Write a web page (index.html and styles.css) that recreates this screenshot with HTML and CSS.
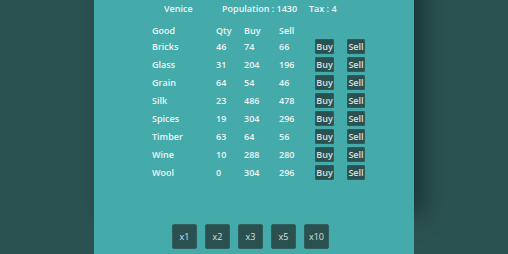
FILE: index.html
```html
<!DOCTYPE html>
<html>
<head>
<meta charset="utf-8">
<link rel="stylesheet" href="styles.css">
</head>
<body>
<div class="panel">
  <div class="city">
    <span class="name">Venice</span>
    <span class="pop">Population : 1430</span>
    <span class="tax">Tax : 4</span>
  </div>
  <div class="market">
    <div class="row head"><span>Good</span><span>Qty</span><span>Buy</span><span>Sell</span></div>
    <div class="row"><span>Bricks</span><span>46</span><span>74</span><span>66</span><button class="btn">Buy</button><button class="btn sell">Sell</button></div>
    <div class="row"><span>Glass</span><span>31</span><span>204</span><span>196</span><button class="btn">Buy</button><button class="btn sell">Sell</button></div>
    <div class="row"><span>Grain</span><span>64</span><span>54</span><span>46</span><button class="btn">Buy</button><button class="btn sell">Sell</button></div>
    <div class="row"><span>Silk</span><span>23</span><span>486</span><span>478</span><button class="btn">Buy</button><button class="btn sell">Sell</button></div>
    <div class="row"><span>Spices</span><span>19</span><span>304</span><span>296</span><button class="btn">Buy</button><button class="btn sell">Sell</button></div>
    <div class="row"><span>Timber</span><span>63</span><span>64</span><span>56</span><button class="btn">Buy</button><button class="btn sell">Sell</button></div>
    <div class="row"><span>Wine</span><span>10</span><span>288</span><span>280</span><button class="btn">Buy</button><button class="btn sell">Sell</button></div>
    <div class="row"><span>Wool</span><span>0</span><span>304</span><span>296</span><button class="btn">Buy</button><button class="btn sell">Sell</button></div>
  </div>
  <div class="mult">
    <button class="mbtn">x1</button>
    <button class="mbtn">x2</button>
    <button class="mbtn">x3</button>
    <button class="mbtn">x5</button>
    <button class="mbtn">x10</button>
  </div>
</div>
</body>
</html>
```
FILE: styles.css
```css
html, body {
  margin: 0;
  padding: 0;
  height: 100%;
}
body {
  background: #2a5251;
  font-family: "Open Sans", "Noto Sans", sans-serif;
  font-weight: 600;
  font-size: 9px;
  color: #eef6f6;
  overflow: hidden;
}
.panel {
  position: relative;
  margin-left: 94px;
  width: 320px;
  height: 254px;
  background: #44aaaa;
  box-shadow: 10px -40px 20px rgba(15, 30, 32, 0.55);
  display: flex;
  flex-direction: column;
}
.city {
  display: flex;
  padding: 3px 0 0 70px;
  line-height: 12px;
  height: 12px;
}
.city .name { width: 58px; }
.city .pop { width: 87px; }
.market {
  margin-top: 9px;
  padding-left: 58px;
}
.row {
  display: grid;
  grid-template-columns: 64px 28px 35px 36px 32px 20px;
  align-items: center;
  height: 18px;
}
.row.head {
  height: 13px;
}
.btn {
  width: 19px;
  height: 15px;
  padding: 0;
  margin: 0;
  border: 1px solid #2f5c5b;
  border-radius: 1px;
  background: #2a5050;
  color: #d6e2e2;
  font: inherit;
  font-size: 9px;
  line-height: 13px;
  text-align: center;
}
.btn.sell { width: 18px; }
.mult {
  margin-top: auto;
  margin-bottom: 5px;
  display: flex;
  gap: 8px;
  padding-left: 78px;
}
.mbtn {
  width: 25px;
  height: 25px;
  padding: 0;
  border: 1px solid #2f5e5d;
  border-radius: 2px;
  background: #2a5050;
  color: #d6e2e2;
  font: inherit;
  font-weight: 400;
  font-size: 9px;
}
```
